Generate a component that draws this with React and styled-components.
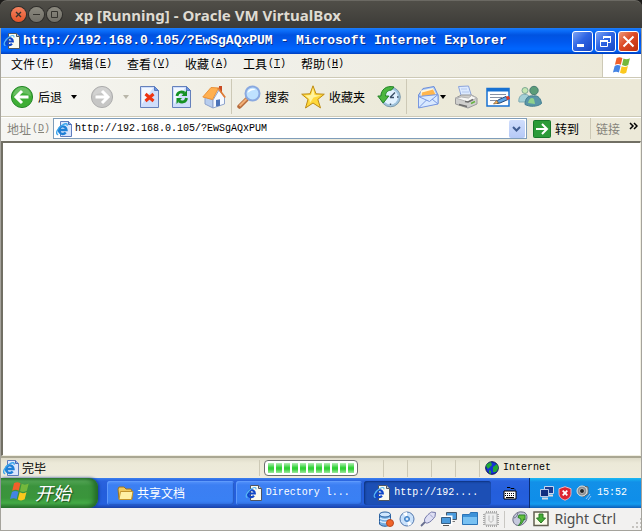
import React from 'react';
import styled, { createGlobalStyle, css } from 'styled-components';

const GlobalStyle = createGlobalStyle`
  * { box-sizing: border-box; }
  body { margin: 0; background: #1c1b19; }
  button, input { font: inherit; color: inherit; }
  button { border: 0; padding: 0; background: none; }
  svg { display: block; flex: none; }
`;

const mono = css`font-family: "Liberation Mono", "Noto Sans CJK SC", monospace;`;
const line = '#cdc9b6';

const Page = styled.div`
  min-height: 100vh;
  display: flex;
  flex-direction: column;
  font: 12px/16px "Noto Sans CJK SC", sans-serif;
  color: #000;
`;
const HostTitle = styled.header`
  height: 28px;
  display: flex;
  align-items: center;
  gap: 3px;
  padding: 0 11px;
  border-radius: 7px 7px 0 0;
  border-top: 1px solid #6b6963;
  background: linear-gradient(#504e48, #3c3b37);
`;
const HostButton = styled.button`
  width: 15px;
  height: 15px;
  border-radius: 50%;
  background: ${(p) => (p.$close ? 'linear-gradient(#f58360, #e3542a)' : 'linear-gradient(#8b897f, #716f67)')};
  box-shadow: 0 0 0 1px #2f2e2b;
  color: #35342f;
  display: grid;
  place-items: center;
`;
const HostName = styled.h1`
  margin: 0 0 0 10px;
  font: bold 15px/20px "Noto Sans", sans-serif;
  color: #dfdbd2;
  white-space: nowrap;
`;
const Screen = styled.main`
  flex: 1;
  display: flex;
  flex-direction: column;
  border: solid #a5a39c;
  border-width: 0 1px;
  background: #ece9d8;
`;
const TitleBar = styled.div`
  height: 26px;
  display: flex;
  align-items: center;
  gap: 2px;
  padding: 0 2px;
  background: linear-gradient(#1c7cf8 0, #0a6cf8 3px, #0053e1 7px, #0058ee 14px, #0066ff 21px, #0062f5 23px, #003dbd 26px);
`;
const TitleText = styled.h2`
  flex: 1;
  min-width: 0;
  margin: 0;
  ${mono}
  font-size: 13px;
  line-height: 18px;
  font-weight: bold;
  color: #fff;
  text-shadow: 1px 1px 0 #0b2f8a;
  white-space: nowrap;
  overflow: hidden;
`;
const CaptionButton = styled.button`
  width: 21px;
  height: 21px;
  border: 1px solid #fff;
  border-radius: 3px;
  background: ${(p) => (p.$close
    ? 'linear-gradient(135deg, #ee9878, #dc4a25 45%, #bd2f0c)'
    : 'linear-gradient(135deg, #7ea4f4, #2f65e4 45%, #1746c4)')};
`;
const MenuBar = styled.nav`
  height: 24px;
  display: flex;
  padding-left: 2px;
  border-bottom: 1px solid ${line};
  background: linear-gradient(90deg, #f4f5f6, #ece9d8);
`;
const MenuButton = styled.button`
  width: 58px;
  padding: 0 8px 4px;
  display: flex;
  align-items: center;
  white-space: nowrap;
`;
const Key = styled.span`
  ${mono}
  font-size: 10px;
  padding-left: 1px;
`;
const FlagBox = styled.div`
  width: 39px;
  margin-left: auto;
  border-left: 1px solid ${line};
  background: #fff;
  display: grid;
  place-items: center;
`;
const ToolBar = styled.div`
  height: 39px;
  display: flex;
  align-items: center;
  padding: 0 0 2px 5px;
  border-top: 1px solid #fff;
  border-bottom: 1px solid ${line};
  background: linear-gradient(90deg, #f6f6f3, #eceada 60%, #ece9d8);
`;
const Tool = styled.button`
  display: flex;
  align-items: center;
  gap: 4px;
  flex: none;
  padding: 0 ${(p) => (p.$tight ? 0 : 4)}px 0 4px;
  margin-left: ${(p) => (p.$apart ? 4 : 0)}px;
  white-space: nowrap;
`;
const Drop = styled.button`
  width: ${(p) => (p.$small ? 10 : 16)}px;
  height: 24px;
  display: flex;
  align-items: center;
  justify-content: ${(p) => (p.$small ? 'flex-start' : 'center')};
  color: ${(p) => (p.disabled ? '#b9b6a9' : '#000')};
`;
const Divider = styled.span`
  width: 1px;
  margin: 0 1px;
  align-self: stretch;
  background: ${line};
`;
const AddressBar = styled.form`
  height: 24px;
  display: flex;
  align-items: stretch;
  padding: 0 0 2px 6px;
  border-top: 1px solid #fff;
  background: linear-gradient(90deg, #f6f6f3, #eceada 60%, #ece9d8);
`;
const AddressLabel = styled.label`
  width: 46px;
  display: flex;
  align-items: center;
  color: #85837a;
  white-space: nowrap;
`;
const Combo = styled.div`
  flex: 1;
  min-width: 0;
  display: flex;
  align-items: center;
  gap: 3px;
  padding: 0 1px 0 2px;
  border: 1px solid #7f9db9;
  background: #fff;
`;
const AddressInput = styled.input`
  flex: 1;
  min-width: 0;
  height: 16px;
  padding: 0;
  border: 0;
  outline: 0;
  background: transparent;
  ${mono}
  font-size: 10px;
`;
const ComboButton = styled.button`
  width: 16px;
  height: 18px;
  display: grid;
  place-items: center;
  border-radius: 2px;
  background: linear-gradient(#d0defc, #b5c9f6);
`;
const GoButton = styled.button`
  display: flex;
  align-items: center;
  gap: 4px;
  padding: 0 10px 0 6px;
`;
const LinksButton = styled.button`
  display: flex;
  gap: 9px;
  padding: 0 3px 0 4px;
  align-items: center;
  color: #85837a;
`;
const Viewport = styled.section`
  flex: 1;
  border: solid #716f64;
  border-width: 2px 1px 1px 2px;
  border-bottom-color: #f1efe2;
  border-right-color: #f1efe2;
  background: #fff;
`;
const StatusBar = styled.footer`
  height: 22px;
  display: flex;
  align-items: center;
  padding-left: 2px;
  border-top: 2px solid #aaa793;
  background: linear-gradient(#dedbc9, #ece9d8 5px, #efecdd);
`;
const StatusText = styled.span`
  flex: 1;
  padding-left: 3px;
`;
const StatusCell = styled.span`
  width: 24px;
  height: 17px;
  border-left: 1px solid ${line};
`;
const Zone = styled.span`
  width: 162px;
  height: 17px;
  display: flex;
  align-items: center;
  gap: 4px;
  padding-left: 5px;
  border-left: 1px solid ${line};
  ${mono}
  font-size: 10px;
`;
const ProgressCell = styled.span`
  width: 124px;
  padding-left: 4px;
  border-left: 1px solid ${line};
`;
const Progress = styled.div`
  width: 94px;
  height: 16px;
  padding: 2px 1px 2px 3px;
  border: 1px solid #6d6d6d;
  border-radius: 4px;
  background: #fff;
`;
const Blocks = styled.div`
  height: 10px;
  background:
    repeating-linear-gradient(90deg, transparent 0 6px, #fff 6px 8px),
    linear-gradient(#b5efb7, #35d33b 45%, #2fd034 60%, #9dea9f);
`;
const TaskBar = styled.nav`
  height: 30px;
  display: flex;
  align-items: stretch;
  background: linear-gradient(#3a80f0 0, #2a62dd 3px, #245edb 14px, #2460de 26px, #1941a5 30px);
`;
const StartButton = styled.button`
  width: 97px;
  display: flex;
  align-items: center;
  gap: 4px;
  padding: 0 0 2px 8px;
  border-radius: 0 9px 9px 0;
  background: linear-gradient(#338035 0, #52a554 3px, #3b933d 8px, #3a953b 20px, #44ab46 25px, #2c7630 30px);
  box-shadow: inset -4px 0 5px #236b27, 1px 0 3px #153b92;
  font-size: 18px;
  line-height: 24px;
  font-style: italic;
  color: #fff;
  text-shadow: 1px 1px 1px #1d4f20;
`;
const Tasks = styled.div`
  flex: 1;
  min-width: 0;
  display: flex;
  gap: 2px;
  padding: 3px 0 3px 9px;
`;
const Task = styled.button`
  width: 127px;
  min-width: 0;
  display: flex;
  align-items: center;
  gap: 3px;
  padding-left: 9px;
  border-radius: 3px;
  color: #fff;
  background: ${(p) => (p.$active ? '#1c4fb5' : 'linear-gradient(#5593fb, #3c7ff3 4px, #3980f4 20px, #2f6de0)')};
  box-shadow: ${(p) => (p.$active ? 'inset 1px 1px 2px #0d327d' : 'inset 1px 1px 0 #5e9afc, inset -1px -1px 1px #2559c4')};
  white-space: nowrap;
`;
const TaskLatin = styled.span`
  ${mono}
  font-size: 10px;
`;
const InputMethod = styled.button`
  width: 38px;
  display: grid;
  place-items: center;
`;
const Tray = styled.div`
  width: 112px;
  display: flex;
  align-items: center;
  gap: 4px;
  padding-left: 9px;
  border-left: 1px solid #092e75;
  background: linear-gradient(#19b9f3 0, #1290e8 4px, #0f8ee9 22px, #149bef 26px, #0c5db8 30px);
  color: #fff;
`;
const Clock = styled.time`
  margin-left: 1px;
  ${mono}
  font-size: 10px;
`;
const HostStatus = styled.footer`
  height: 23px;
  display: flex;
  align-items: center;
  justify-content: flex-end;
  gap: 5px;
  padding-left: 5px;
  border: solid #a5a39c;
  border-width: 0 1px 1px;
  background: #f2f1f0;
  font: 14px/20px "Noto Sans", sans-serif;
  color: #4c4c4c;
  white-space: nowrap;
`;
const HostDivider = styled.span`
  width: 1px;
  height: 17px;
  margin-right: 2px;
  background: #c9c7c3;
`;
const HostKey = styled.span`
  margin-right: 10px;
`;

const Svg = ({ s = 16, h, box, children }) => (
  <svg width={s} height={h || s} viewBox={box || `0 0 ${s} ${h || s}`} fill="none" aria-hidden="true">{children}</svg>
);

const PageIcon = () => (
  <Svg s={18} h={16}>
    <path d="M5.500.5h8l3 3v12h-11z" fill="#fbfaee" stroke="#4e5560" />
    <path d="M13.5.5v3h3" fill="#c8ccd6" stroke="#4e5560" />
    <path d="M3 8.500h6.800A3.500 3.500 0 1 0 9 10.800" stroke="#0f46c8" strokeWidth="2.200" />
    <path d="M2.500 12.500C-.5 12 2 6.500 6.500 3.800c3-1.800 5-1.800 4.300.6" stroke="#57b8f5" strokeWidth="1.200" />
  </Svg>
);
const BrowserIcon = () => (
  <Svg s={16}>
    <path d="M4.5.5h8l3 3v12h-11z" fill="#dbe6fc" stroke="#5f7dbd" />
    <path d="M12.5.5v3h3" fill="#8fb0ee" stroke="#4b6cb5" />
    <path d="M3 9h7.500A3.800 3.800 0 1 0 9.700 11.500" stroke="#1e7fd6" strokeWidth="2.400" />
    <path d="M2.200 13.800C-1.500 13 2 6.500 6.500 4c3-1.700 5.200-1.800 4.500.8" stroke="#3aa6ec" strokeWidth="1.400" />
  </Svg>
);
const Flag = ({ s = 24 }) => (
  <Svg s={s} box="0 0 24 24">
    <path d="M5.500 2.500c2.600-1.600 4.800-1.400 7-.1L10.600 10.500c-2.200-1.300-4.400-1.400-7.100.1z" fill="#f0602a" />
    <path d="M13.800 3.100c2.600 1.300 5 1.100 7.700-.4l-2 8c-2.600 1.600-5 1.500-7.500.2z" fill="#74b83c" />
    <path d="M3.200 11.900c2.500-1.400 4.800-1.400 7.100-.1l-2 8c-2.300-1.300-4.600-1.300-7.200.1z" fill="#4484e4" />
    <path d="M11.600 12.400c2.500 1.300 4.900 1.200 7.500-.4l-2 8c-2.600 1.600-5 1.500-7.500.2z" fill="#fbc81d" />
  </Svg>
);
const RoundArrow = ({ forward }) => (
  <Svg s={24}>
    <circle cx="12" cy="12" r="10.600" fill={forward ? '#c6c6c5' : '#3fae36'} stroke={forward ? '#aeaeae' : '#28882b'} />
    <path d="M3 11A9 9 0 0 1 21 11Q12 5 3 11" fill="#fff" opacity=".22" />
    <path d={forward ? 'M5.500 12h12M12 6l6 6-6 6' : 'M18.500 12h-12M12 6l-6 6 6 6'} stroke="#fff" strokeWidth="3" />
  </Svg>
);
const Caret = () => <Svg s={6} h={4}><path d="M0 0h6L3 4z" fill="currentColor" /></Svg>;
const Sheet = () => (
  <>
    <path d="M2.500 1.500h14l4 4v17h-18z" fill="#cfdefb" stroke="#6581bb" />
    <path d="M4 3h11l-11 16z" fill="#f3f8ff" />
    <path d="M16.500 1.500v4h4z" fill="#6a92de" stroke="#587bbf" />
  </>
);
const StopIcon = () => <Svg s={24}><Sheet /><path d="M7.500 9l8 7M15.500 9l-8 7" stroke="#ee3512" strokeWidth="3" /></Svg>;
const RefreshIcon = () => (
  <Svg s={24}>
    <Sheet />
    <path d="M7 11c.5-4 4.500-5 7.500-3" stroke="#159224" strokeWidth="2.800" />
    <path d="M11.500 11h5.500V5z" fill="#159224" />
    <path d="M16.500 13c-.5 4-4.500 5-7.500 3" stroke="#159224" strokeWidth="2.800" />
    <path d="M12 13H6.500v6z" fill="#159224" />
  </Svg>
);
const HomeIcon = () => (
  <Svg s={24}>
    <path d="M17 1h3v7h-3z" fill="#c94b22" />
    <path d="M3 12l8 3v8l-8-4z" fill="#b7cdee" stroke="#8ea3cc" />
    <path d="M11 15l6-10 5.500 7v7L11 23z" fill="#f5f9ff" stroke="#8ea3cc" />
    <path d="M.8 12L9 2.500l7.500.5-6 11.500z" fill="#ffb050" stroke="#e9923a" />
    <path d="M16 3l7.200 9.500" stroke="#e07c35" strokeWidth="1.800" />
    <path d="M14 15l4-.8v6.500l-4 .8z" fill="#4c74b8" />
  </Svg>
);
const SearchIcon = () => (
  <Svg s={24}>
    <path d="M9.500 14.500L2.500 21.500" stroke="#b66b3b" strokeWidth="4.500" strokeLinecap="round" />
    <path d="M9.500 14l-7 7" stroke="#f2af75" strokeWidth="2.200" />
    <circle cx="15.500" cy="8.500" r="7" fill="#bfe2ff" stroke="#8aa9e0" strokeWidth="2" />
    <path d="M10.500 8c1-5 6-5 8-3-3-.5-5 .5-8 3" fill="#fff" />
  </Svg>
);
const StarIcon = () => (
  <Svg s={24}>
    <path d="M12 .8l3 8 8.300.4-6.500 5.200 2.700 8.500L12 18l-7.500 5 2.500-8.600L.7 9.200 9 8.800z" fill="#ffd83a" stroke="#bd8b14" />
    <path d="M12 3l1.500 7 6.500.5-7.500 2L9 18l-.8-4L4 10.400l6-.4z" fill="#fff4a0" />
  </Svg>
);
const HistoryIcon = () => (
  <Svg s={24}>
    <circle cx="13.500" cy="12" r="9.800" fill="#9fc3dd" stroke="#7b98aa" />
    <circle cx="13.500" cy="12" r="7.500" fill="#e3f2ff" />
    <path d="M13 12.500l5-5M13 12.500h4M20 12h1.500M13.500 18.500V20M13.500 4v1.500" stroke="#3d5169" strokeWidth="1.400" />
    <path d="M17 2C9 0 4 5 4 11H.8l5.400 7 5.600-7H8.500c0-4 3-6 6-6z" fill="#4bb63f" stroke="#248326" />
  </Svg>
);
const MailIcon = () => (
  <Svg s={24}>
    <path d="M2.500 10L7 3.500l11-2 4 8.500v8.500l-19.500 4z" fill="#a9c9fa" stroke="#6f8fd6" />
    <path d="M5 5.500l12-2.500 3.500 7L12 16l-7.500-4z" fill="#fff6dc" />
    <path d="M6 7.500l11-3 2.500 5-9 3.500-5-1z" fill="#ffb54d" />
    <path d="M2.500 11.500l19.500-2v9.500l-19.500 4z" fill="#d9e9ff" stroke="#7998e0" />
    <path d="M2.500 11.500l11 5 8.500-7M2.500 23l8-8M22 19l-6-5" stroke="#7998e0" />
  </Svg>
);
const PrintIcon = () => (
  <Svg s={24}>
    <path d="M4.500 1.500l10-.5 3 10-10 1z" fill="#dceaff" stroke="#8ba4dc" />
    <path d="M7 4h6M8 7h7" stroke="#b4c8ee" />
    <path d="M1.500 13l6-3h10l5.500 3v6l-9 4-12.500-4z" fill="#cfcfcd" stroke="#999" />
    <path d="M1.500 13l12.500 4 9-4-5.500-2.500-3 2.500-7-1z" fill="#f7f7f5" stroke="#b5b5b5" />
    <path d="M5 19.500l8 2M11 16.500l3 .5 5-2.500" stroke="#6d6d6d" strokeWidth="1.600" />
    <path d="M17 18.500l4-2" stroke="#66b43f" strokeWidth="1.500" />
  </Svg>
);
const EditIcon = () => (
  <Svg s={24}>
    <path d="M1 3.500h22v17.500H1z" fill="#fff" stroke="#1771d2" strokeWidth="1.500" />
    <path d="M1 3h22v3.500H1z" fill="#1771d2" />
    <path d="M4 9.500h16M4 12.500h12M4 15.500h7" stroke="#8791a4" />
    <path d="M10 17l3-2.500 7-3 2 3-8 3.500-3 .5z" fill="#5ba3e7" stroke="#254879" />
    <path d="M20 11.500l3-.5 1 3-3 1z" fill="#df3e28" />
    <path d="M7.500 19l3-3.500 2 2.500z" fill="#ffb75e" stroke="#6a4a20" strokeWidth=".6" />
  </Svg>
);
const PeopleIcon = () => (
  <Svg s={24}>
    <circle cx="7" cy="5.500" r="3" fill="#c4e6b0" stroke="#7ea895" />
    <path d="M.8 16c0-5 3-7 6-6.500 4-.5 6 3 5 7.500H1z" fill="#a3d0d6" stroke="#7eabb3" />
    <circle cx="16" cy="5.500" r="4.200" fill="#5c9d78" stroke="#487b72" />
    <path d="M7 19.500c0-6 3-9.500 8.500-8.500 4.500-1 7.500 2.500 8 7.500-4 3.500-12 3.500-16.500 1z" fill="#5a96a8" stroke="#447f90" />
    <path d="M10 18c1-5 4-6 6-4l1 5z" fill="#8fd18d" />
  </Svg>
);
const GoIcon = () => (
  <Svg s={18}>
    <rect x=".5" y=".5" width="17" height="17" rx="1" fill="#2c9b38" stroke="#19782a" />
    <path d="M3 9h10.500M9 4l5 5-5 5" stroke="#fff" strokeWidth="2" />
  </Svg>
);
const GlobeIcon = () => (
  <Svg s={14}>
    <circle cx="7" cy="7" r="6.300" fill="#1533d5" stroke="#061249" />
    <path d="M2 3l4-2 1 3-2 2-2 2-2-3zM8 6l4-3 1.500 4L11 11H8z" fill="#22a834" />
    <path d="M4 9l2 1v3l-2-1z" fill="#22a834" />
  </Svg>
);
const FolderIcon = () => (
  <Svg s={18} h={16}>
    <path d="M2 4l1-2h5l2 2h5l1 2v8H3z" fill="#f0c95c" stroke="#9a7222" />
    <path d="M4.500 6.500h12.500l-1.500 8H3z" fill="#fff0a3" stroke="#c2942c" />
  </Svg>
);
const KeyboardIcon = () => (
  <Svg s={14}>
    <path d="M4 1.500h3l1 1h3l1 1" stroke="#000" />
    <path d="M1 5h12v8H1z" fill="#fff" stroke="#000" />
    <path d="M2 7.500h10M2 9.500h10" stroke="#000" strokeDasharray="1 1" />
    <path d="M3 11.500h8" stroke="#000" />
  </Svg>
);
const NetworkIcon = () => (
  <Svg s={15}>
    <path d="M5.500.500h9v7h-9z" fill="#1b3c93" stroke="#c9d7ef" /><path d="M10 9.500h4" stroke="#ddd" strokeWidth="2" />
    <path d="M1.500 3.500h8v7h-8z" fill="#122d80" stroke="#b9c9e8" /><path d="M3 12.500h6" stroke="#d2d9e5" strokeWidth="2" />
  </Svg>
);
const ShieldIcon = () => (
  <Svg s={14} h={15}>
    <path d="M7 .7l6 2v5c0 3-2.500 5.300-6 6.500-3.500-1.200-6-3.500-6-6.500v-5z" fill="#dd2430" stroke="#f0b6c0" />
    <path d="M4.700 4.700l4.600 4.600M9.300 4.700L4.700 9.300" stroke="#fff" strokeWidth="1.800" />
  </Svg>
);
const SpeakerIcon = () => (
  <Svg s={16}>
    <path d="M7 1l5 1v7l-5 3z" fill="#b9bdc0" stroke="#5d6164" />
    <circle cx="6" cy="6" r="5" fill="#8a8e92" stroke="#e2e4e5" /><circle cx="6" cy="6" r="2.500" fill="#202428" stroke="#bbb" />
    <path d="M10 14l4-5M12 15l3-4" stroke="#8fc4f5" />
  </Svg>
);
const DiskIcon = () => (
  <Svg s={16}>
    <path d="M1.500 3v10c2 3 9 3 11 0V3" fill="#75ace0" stroke="#275f9f" />
    <ellipse cx="7" cy="3.500" rx="5.500" ry="2.500" fill="#d0e7ff" stroke="#275f9f" />
    <path d="M2 7c2 2 8 2 10 0M2 10c2 2 8 2 10 0" stroke="#d8edff" strokeWidth="1.500" />
    <circle cx="12" cy="12" r="3.500" fill="#f16428" stroke="#bb491f" />
  </Svg>
);
const DiscIcon = () => (
  <Svg s={16}>
    <circle cx="8" cy="8" r="7" fill="#cae2fb" stroke="#5277ac" /><path d="M8 8L4 2l4-1zM8 8l5 5-4 2z" fill="#fff" />
    <circle cx="8" cy="8" r="2.500" fill="#6ca8e5" stroke="#427ebf" /><circle cx="8" cy="8" r="1" fill="#fff" />
  </Svg>
);
const UsbIcon = () => (
  <Svg s={16}>
    <path d="M4.500 9c0-2 4-6.500 7-8l4 .5-.5 4c-2 3-5 6-7.500 6.500-2 .5-3-1-3-3z" fill="#dedff4" stroke="#7277a8" />
    <path d="M5 11l-2 2-2 2" stroke="#666d8e" strokeWidth="1.800" /><path d="M10 3.500l3 3" stroke="#9a9ec8" />
  </Svg>
);
const ShareIcon = () => (
  <Svg s={16}>
    <path d="M5.500 1.500h10v7h-10z" fill="#4b9bdd" stroke="#44586c" /><path d="M10 10.500h4" stroke="#777" />
    <path d="M1 6h9v7H1z" fill="#65b4f1" stroke="#fff" strokeWidth="3" /><path d="M.5 6.500h9v6h-9z" fill="#4b9bdd" stroke="#385e82" /><path d="M2 14.500h6" stroke="#555" />
  </Svg>
);
const BlueFolderIcon = () => (
  <Svg s={16}>
    <path d="M.5 13.500v-10h7l1-2h7v12z" fill="#3d92d8" stroke="#2b73b6" /><path d="M1 6h14v7H1z" fill="#78c1f2" />
  </Svg>
);
const ChipIcon = () => (
  <Svg s={16}>
    <path d="M3 1h11M3 15h11M1 3v11M15 3v11" stroke="#a9a9a9" strokeWidth="2" strokeDasharray="1 1" />
    <rect x="2" y="2" width="12" height="12" rx="1" fill="#efefef" stroke="#b0b0b0" />
    <path d="M6 4.500v5l2 2 2-2v-5" stroke="#b5b5b5" />
  </Svg>
);
const MouseIcon = () => (
  <Svg s={16}>
    <path d="M1 10C0 5 5 0 10 1c5 0 6 5 4 9-3 5-11 7-13 0z" fill="#c6c9de" stroke="#686b80" />
    <path d="M6 2c-1 3-1 4-4 5" stroke="#727689" /><path d="M7 4h6v5l-1.500-1c0 3-2 5-5 6.500 2.500-3 3-5 2-7L6 6.500z" fill="#66c03e" stroke="#298328" />
  </Svg>
);
const CaptureIcon = () => (
  <Svg s={16}>
    <path d="M1 1h14v13.500H1z" fill="#fbfbeb" stroke="#625f50" strokeWidth="1.500" />
    <path d="M6 3h4v4h2.500L8 12 3.500 7H6z" fill="#47ae37" stroke="#297824" />
  </Svg>
);

const menus = [['文件', 'F'], ['编辑', 'E'], ['查看', 'V'], ['收藏', 'A'], ['工具', 'T'], ['帮助', 'H']];
const Mnemonic = ({ k }) => <Key>(<u>{k}</u>)</Key>;

export default function App() {
  return (
    <Page>
      <GlobalStyle />
      <HostTitle>
        <HostButton $close aria-label="Close"><Svg s={7}><path d="M1 1l5 5M6 1L1 6" stroke="currentColor" strokeWidth="1.400" /></Svg></HostButton>
        <HostButton aria-label="Minimize"><Svg s={7}><path d="M0 3.500h7" stroke="currentColor" /></Svg></HostButton>
        <HostButton aria-label="Maximize"><Svg s={7}><path d="M.5.500h6v6h-6z" stroke="currentColor" /></Svg></HostButton>
        <HostName>xp [Running] - Oracle VM VirtualBox</HostName>
      </HostTitle>
      <Screen>
        <TitleBar>
          <PageIcon />
          <TitleText>http://192.168.0.105/?EwSgAQxPUM - Microsoft Internet Explorer</TitleText>
          <CaptionButton aria-label="最小化"><Svg s={19}><path d="M4 13.500h7" stroke="#fff" strokeWidth="3" /></Svg></CaptionButton>
          <CaptionButton aria-label="还原">
            <Svg s={19}><path d="M7.500 7V4.500h7v6h-2.500" stroke="#fff" /><path d="M7 5h8M4 9h8" stroke="#fff" strokeWidth="2" /><path d="M4.500 8.500h7v6h-7z" stroke="#fff" /></Svg>
          </CaptionButton>
          <CaptionButton $close aria-label="关闭"><Svg s={19}><path d="M4.500 4.500l10 10M14.500 4.500l-10 10" stroke="#fff" strokeWidth="2" /></Svg></CaptionButton>
        </TitleBar>
        <MenuBar>
          {menus.map(([name, k]) => <MenuButton key={k}>{name}<Mnemonic k={k} /></MenuButton>)}
          <FlagBox><Flag s={20} /></FlagBox>
        </MenuBar>
        <ToolBar>
          <Tool><RoundArrow />后退</Tool>
          <Drop aria-label="后退列表"><Caret /></Drop>
          <Tool $apart aria-label="前进" disabled><RoundArrow forward /></Tool>
          <Drop disabled aria-label="前进列表"><Caret /></Drop>
          <Tool aria-label="停止"><StopIcon /></Tool>
          <Tool aria-label="刷新"><RefreshIcon /></Tool>
          <Tool aria-label="主页"><HomeIcon /></Tool>
          <Divider />
          <Tool><SearchIcon />搜索</Tool>
          <Tool $apart><StarIcon />收藏夹</Tool>
          <Tool $apart aria-label="历史"><HistoryIcon /></Tool>
          <Divider />
          <Tool $apart $tight aria-label="邮件"><MailIcon /></Tool>
          <Drop $small aria-label="邮件列表"><Caret /></Drop>
          <Tool aria-label="打印"><PrintIcon /></Tool>
          <Tool aria-label="编辑"><EditIcon /></Tool>
          <Tool aria-label="Messenger"><PeopleIcon /></Tool>
        </ToolBar>
        <AddressBar onSubmit={(e) => e.preventDefault()}>
          <AddressLabel htmlFor="address">地址<Mnemonic k="D" /></AddressLabel>
          <Combo>
            <BrowserIcon />
            <AddressInput id="address" defaultValue="http://192.168.0.105/?EwSgAQxPUM" />
            <ComboButton type="button" aria-label="地址列表"><Svg s={9} h={6}><path d="M1 1l3.500 3.500L8 1" stroke="#405d91" strokeWidth="2" /></Svg></ComboButton>
          </Combo>
          <GoButton type="submit"><GoIcon />转到</GoButton>
          <Divider />
          <LinksButton type="button">链接<Svg s={9} h={16}><path d="M1 2l3 3-3 3M5 2l3 3-3 3" stroke="#000" strokeWidth="1.500" /></Svg></LinksButton>
        </AddressBar>
        <Viewport aria-label="网页" />
        <StatusBar>
          <BrowserIcon />
          <StatusText>完毕</StatusText>
          <ProgressCell><Progress role="progressbar" aria-label="进度"><Blocks /></Progress></ProgressCell>
          <StatusCell /><StatusCell /><StatusCell /><StatusCell />
          <Zone><GlobeIcon />Internet</Zone>
        </StatusBar>
        <TaskBar>
          <StartButton><Flag s={22} />开始</StartButton>
          <Tasks>
            <Task><FolderIcon />共享文档</Task>
            <Task><PageIcon /><TaskLatin>Directory l...</TaskLatin></Task>
            <Task $active><PageIcon /><TaskLatin>http://192....</TaskLatin></Task>
          </Tasks>
          <InputMethod aria-label="输入法"><KeyboardIcon /></InputMethod>
          <Tray><NetworkIcon /><ShieldIcon /><SpeakerIcon /><Clock>15:52</Clock></Tray>
        </TaskBar>
      </Screen>
      <HostStatus>
        <DiskIcon /><DiscIcon /><UsbIcon /><ShareIcon /><BlueFolderIcon /><ChipIcon />
        <HostDivider />
        <MouseIcon /><CaptureIcon />
        <HostKey>Right Ctrl</HostKey>
        <Svg s={10} h={20}><path d="M1 18h2M5 18h2M9 18h1M5 14h2M9 14h1M9 10h1" stroke="#c5c3bf" strokeWidth="2" /></Svg>
      </HostStatus>
    </Page>
  );
}
